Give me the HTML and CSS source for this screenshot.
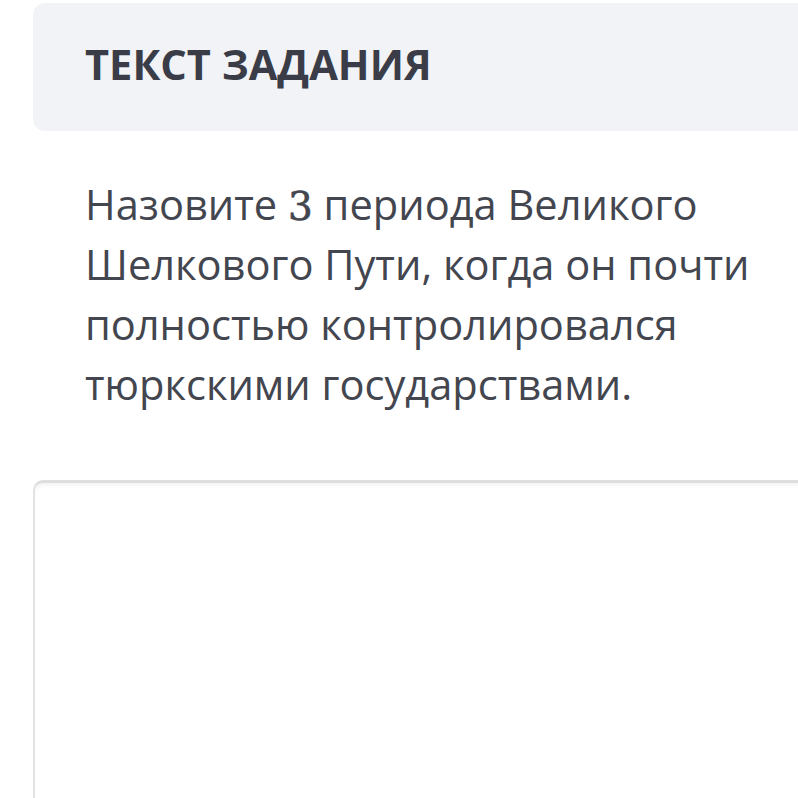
FILE: index.html
```html
<!DOCTYPE html>
<html lang="ru">
<head>
<meta charset="utf-8">
<link rel="stylesheet" href="styles.css">
</head>
<body>
<main class="page">
  <section class="task-head">
    <h1 class="task-title">ТЕКСТ ЗАДАНИЯ</h1>
  </section>
  <p class="task-text">Назовите <span class="math">3</span> периода Великого Шелкового Пути, когда он почти полностью контролировался тюркскими государствами.</p>
  <div class="answer-box"></div>
</main>
</body>
</html>
```
FILE: styles.css
```css
html, body {
  margin: 0;
  padding: 0;
  background: #ffffff;
  overflow: hidden;
  width: 798px;
  height: 798px;
}

.page {
  height: 798px;
  box-sizing: border-box;
  padding: 3px 0 0 33px;
  display: flex;
  flex-direction: column;
  font-family: "Open Sans", "Noto Sans", sans-serif;
}

.task-head {
  flex: none;
  background: #f2f3f7;
  border-radius: 12px 0 0 12px;
  height: 128px;
  margin-right: -30px;
  padding-left: 52px;
  display: flex;
  align-items: center;
  box-sizing: border-box;
}

.task-title {
  margin: 0 0 4px 0;
  font-size: 41.6px;
  font-weight: 700;
  color: #3a3d47;
  line-height: 1;
}

.task-text {
  flex: none;
  margin: 43px 0 0 0;
  padding-left: 52px;
  font-size: 41.6px;
  line-height: 60px;
  color: #43464f;
}

.math {
  font-family: "DejaVu Serif", "Liberation Serif", serif;
  font-size: 39px;
  line-height: 1;
  -webkit-text-stroke: 0.6px #43464f;
}

.answer-box {
  flex: 1;
  margin-top: 66px;
  margin-right: -30px;
  border: 2px solid #e3e3e3;
  border-top: 3px solid #dedede;
  border-bottom: none;
  border-radius: 10px 0 0 0;
  box-shadow: inset 0 4px 4px -2px rgba(0, 0, 0, 0.06);
}
```
